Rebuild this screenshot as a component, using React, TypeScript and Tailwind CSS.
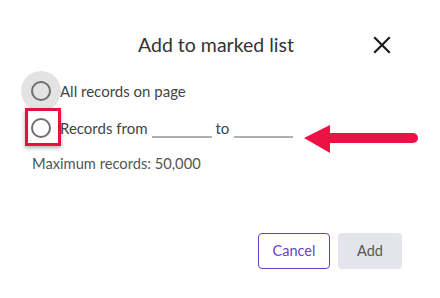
import React from "react";

function Radio({ halo }: { halo?: boolean }) {
  return (
    <span className="relative flex h-[20px] w-[20px] shrink-0 items-center justify-center">
      {halo && (
        <span className="absolute left-[-10px] top-[-10px] h-[40px] w-[40px] rounded-full bg-[#e3e3e3]" />
      )}
      <span className="relative h-[20px] w-[20px] rounded-full border-[2px] border-[#6e6e6e] bg-transparent" />
    </span>
  );
}

export default function App() {
  return (
    <div
      className="relative h-[298px] w-[440px] overflow-hidden bg-white text-[#333]"
      style={{ fontFamily: "Lato, 'Noto Sans', sans-serif" }}
    >
      {/* header */}
      <div className="flex items-center pl-[70px] pt-[33px]">
        <div className="flex-1 text-center text-[19.5px] leading-[24px] text-[#333]">
          Add to marked list
        </div>
        <button className="mr-[38px] flex h-[24px] w-[40px] items-center justify-center">
          <svg width="18" height="18" viewBox="0 0 18 18">
            <path d="M2 2 L16 16 M16 2 L2 16" stroke="#1a1a1a" strokeWidth="2.2" strokeLinecap="square" />
          </svg>
        </button>
      </div>

      {/* options */}
      <div className="flex flex-col pl-[31px] pt-[22px]">
        <div className="flex h-[24px] items-center">
          <Radio halo />
          <span className="ml-[9px] text-[15px] text-[#444]">All records on page</span>
        </div>
        <div className="mt-[13px] flex h-[24px] items-center">
          <span className="relative flex">
            <Radio />
            <span className="absolute left-[-6px] top-[-10px] h-[38px] w-[36px] border-[3px] border-[#e8103f] shadow-[0_2px_4px_rgba(0,0,0,0.3)]" />
          </span>
          <span className="ml-[9px] text-[15px] text-[#444]">Records from</span>
          <span className="ml-[4px] mt-[18px] h-[2px] w-[60px] bg-[#b0b0b4]" />
          <span className="ml-[4px] text-[15px] text-[#444]">to</span>
          <span className="ml-[5px] mt-[18px] h-[2px] w-[59px] bg-[#b0b0b4]" />
        </div>
        <div className="ml-[1px] mt-[13px] text-[14.7px] leading-[20px] text-[#555]">
          Maximum records: 50,000
        </div>
      </div>

      {/* annotation arrow */}
      <svg className="absolute left-[302px] top-[124px]" width="116" height="30" viewBox="0 0 116 30">
        <path d="M2 14 L28 1 L28 29 Z" fill="#ee1143" />
        <path d="M26 14 L111 14" stroke="#ee1143" strokeWidth="10" strokeLinecap="round" />
      </svg>

      {/* footer */}
      <div className="mt-[60px] flex justify-end gap-[8px] pr-[38px]">
        <button className="h-[36px] w-[72px] rounded-[4px] border border-[#6a3fd0] text-[14.5px] text-[#6a3fd0]">
          Cancel
        </button>
        <button className="h-[36px] w-[64px] rounded-[4px] bg-[#e4e4ec] text-[14.5px] text-[#555]">
          Add
        </button>
      </div>
    </div>
  );
}
